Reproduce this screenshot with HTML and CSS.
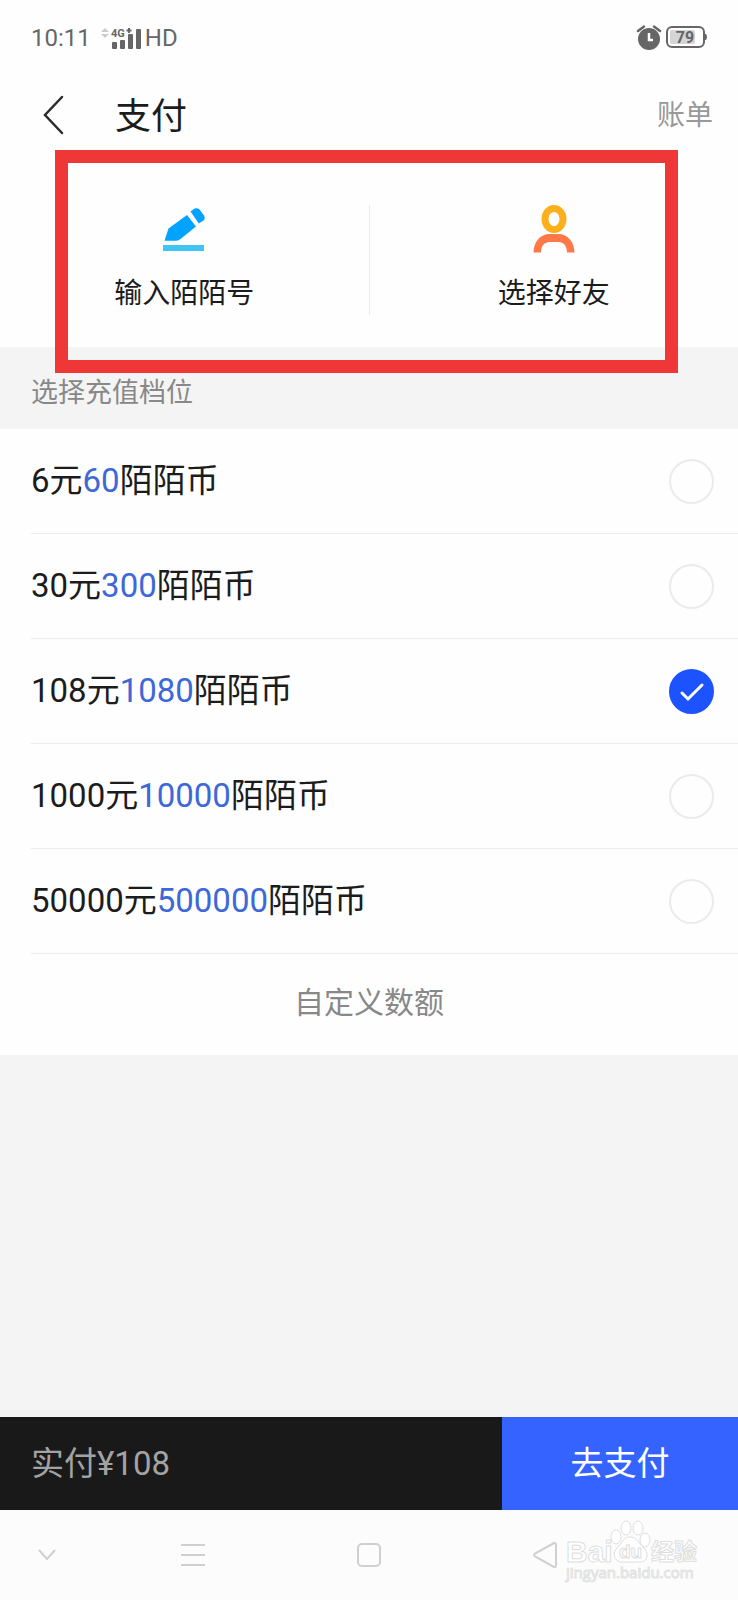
FILE: index.html
```html
<!DOCTYPE html>
<html lang="zh-CN">
<head>
  <meta charset="UTF-8">
  <meta name="viewport" content="width=device-width, initial-scale=1">
  <title>支付</title>
  <link rel="stylesheet" href="styles.css">
</head>
<body>
  <div class="status-bar">
    <span class="time">10:11</span>
    <svg class="signal" width="42" height="24" viewBox="0 0 42 24" aria-hidden="true">
      <path d="M0 6l4-4 4 4zM0 8l4 4 4-4z" fill="#ccc"/>
      <text x="10" y="11" font-size="11">4G</text>
      <path d="M28 2v5M25.500 4.500h5" stroke="#666" stroke-width="2"/>
      <g fill="#666">
        <rect x="11" y="16" width="5" height="7" rx="1"/>
        <rect x="19" y="14" width="5" height="9" rx="1"/>
        <rect x="27" y="8" width="5" height="15" rx="1"/>
        <rect x="35" y="3" width="5" height="20" rx="1"/>
      </g>
    </svg>
    <span class="hd">HD</span>
    <svg class="alarm" width="26" height="26" viewBox="0 0 26 26" aria-hidden="true">
      <circle cx="13" cy="14" r="11" fill="#666"/>
      <path d="M2 6l6-4.500M24 6l-6-4.500" stroke="#666" stroke-width="2.500" stroke-linecap="round"/>
      <path d="M13 8v7h4" fill="none" stroke="#fff" stroke-width="2.500"/>
    </svg>
    <svg class="battery" width="42" height="24" viewBox="0 0 42 24" aria-hidden="true">
      <rect x="1" y="1" width="37" height="20" rx="5" fill="#fff" stroke="#666" stroke-width="2"/>
      <rect x="4" y="4" width="25" height="14" rx="2" fill="#d5d5d5"/>
      <path d="M38 8h2q2 3 0 6h-2z" fill="#666"/>
      <text x="19" y="17" font-size="16" text-anchor="middle">79</text>
    </svg>
  </div>

  <header class="header">
    <button class="back" aria-label="返回">
      <svg width="24" height="40" viewBox="0 0 24 40" aria-hidden="true">
        <path d="M21 2L4 20l17 18" fill="none" stroke="#2b2b2b" stroke-width="2.500" stroke-linecap="round"/>
      </svg>
    </button>
    <h1>支付</h1>
    <a class="bill" href="#">账单</a>
  </header>

  <section class="actions">
    <button class="action">
      <svg width="48" height="48" viewBox="0 0 48 48" aria-hidden="true">
        <path d="M27 10l9 11.500-15.500 12.500q-2 1.700-4 1.700H4.500L8.500 23.500z" fill="#00a3ff"/>
        <path d="M30.500 6.500l4-3q3-1 5 1l4.500 6q1.500 3-.5 5L38.800 18.500z" fill="#00a3ff"/>
        <rect x="3" y="40" width="41" height="6" fill="#40c4f4"/>
      </svg>
      <span>输入陌陌号</span>
    </button>
    <button class="action">
      <svg width="48" height="48" viewBox="0 0 48 48" aria-hidden="true">
        <ellipse cx="24" cy="14" rx="9" ry="10.500" fill="none" stroke="#fdb01e" stroke-width="7"/>
        <path d="M3.500 47.500C3.500 37 10.500 29 19.500 29h9c9 0 16 8 16 18.500h-7.500C37 41 33.500 37 28.500 37h-9c-5 0-8.500 4-8.500 10.500z" fill="#ff7847"/>
      </svg>
      <span>选择好友</span>
    </button>
    <div class="highlight"></div>
  </section>

  <main class="content">
    <h2 class="section-title" id="tiers">选择充值档位</h2>
    <div class="options" role="radiogroup" aria-labelledby="tiers">
      <label class="option">
        <span>6元<b>60</b>陌陌币</span>
        <input type="radio" name="tier" value="6">
      </label>
      <label class="option">
        <span>30元<b>300</b>陌陌币</span>
        <input type="radio" name="tier" value="30">
      </label>
      <label class="option">
        <span>108元<b>1080</b>陌陌币</span>
        <input type="radio" name="tier" value="108" checked>
      </label>
      <label class="option">
        <span>1000元<b>10000</b>陌陌币</span>
        <input type="radio" name="tier" value="1000">
      </label>
      <label class="option">
        <span>50000元<b>500000</b>陌陌币</span>
        <input type="radio" name="tier" value="50000">
      </label>
    </div>
    <button class="custom">自定义数额</button>
  </main>

  <footer class="pay-bar">
    <div class="total">实付¥108</div>
    <button class="pay">去支付</button>
  </footer>

  <nav class="nav-bar">
    <button aria-label="收起">
      <svg width="26" height="26" viewBox="0 0 26 26"><path d="M5 8l8 9 8-9"/></svg>
    </button>
    <button aria-label="菜单">
      <svg width="26" height="26" viewBox="0 0 26 26"><path d="M1 3h24M1 13h24M1 23h24"/></svg>
    </button>
    <button aria-label="主页">
      <svg width="26" height="26" viewBox="0 0 26 26"><rect x="2" y="2" width="22" height="22" rx="4"/></svg>
    </button>
    <button aria-label="后退">
      <svg width="26" height="28" viewBox="0 0 26 28"><path d="M21 2L2 12.500q-2 1.500 0 3L21 26q2 .5 2-2V4q0-2.500-2-2z"/></svg>
    </button>
    <svg class="watermark" width="140" height="68" viewBox="0 0 140 68">
      <g class="outline">
        <text x="2" y="46" font-size="30">Bai</text>
        <ellipse cx="52" cy="21" rx="5" ry="7"/>
        <ellipse cx="62" cy="12" rx="5" ry="7"/>
        <ellipse cx="74" cy="12" rx="5" ry="7"/>
        <ellipse cx="81" cy="24" rx="5" ry="7"/>
        <path d="M66 21c-7 0-8 7-13 11-5 5-3 13 4 14h19c8 0 9-9 4-14-5-4-7-11-14-11z"/>
        <text x="55" y="42" font-size="19">du</text>
        <text class="cn" x="87" y="44" font-size="23">经验</text>
      </g>
      <text class="url" x="2" y="62" font-size="15">jingyan.baidu.com</text>
    </svg>
  </nav>
</body>
</html>
```

FILE: styles.css
```css
* {
  box-sizing: border-box;
}

body {
  display: flex;
  flex-direction: column;
  min-height: 100vh;
  margin: 0;
  background-color: #fefefe;
  color: #1c1c1c;
  font-family: Roboto, "Noto Sans CJK SC", sans-serif;
}

button {
  padding: 0;
  border: none;
  background: none;
  color: inherit;
  font-family: inherit;
  cursor: pointer;
}

svg {
  display: block;
}

/* Status bar */
.status-bar {
  display: flex;
  align-items: center;
  height: 76px;
  padding: 0 30px 0 31px;
  color: #666;
  font-size: 24px;
}

.signal {
  margin: 0 2px 0 10px;
}

.signal text,
.battery text {
  fill: #666;
  font-weight: bold;
}

.alarm {
  margin-left: auto;
  margin-right: 4px;
}

/* Header */
.header {
  display: flex;
  align-items: center;
  height: 78px;
  padding: 0 25px 0 41px;
}

.header h1 {
  flex: 1;
  margin: 0 0 0 50px;
  padding-bottom: 4px;
  font-size: 36px;
  font-weight: 400;
}

.bill {
  padding-bottom: 4px;
  color: #999;
  font-size: 28px;
  text-decoration: none;
}

/* Actions */
.actions {
  position: relative;
  display: flex;
  padding: 51px 0 32px;
}

.action {
  display: flex;
  flex: 1;
  flex-direction: column;
  align-items: center;
  gap: 20px;
  font-size: 28px;
  line-height: 42px;
}

.action:first-child {
  border-right: 1px solid #ebebeb;
}

.highlight {
  position: absolute;
  top: -4px;
  right: 60px;
  bottom: -26px;
  left: 55px;
  border: 13px solid #ef3737;
  pointer-events: none;
}

/* Options */
.content {
  flex: 1;
  background-color: #f4f4f4;
}

.section-title {
  margin: 0;
  padding: 26px 31px 16px;
  color: #888;
  font-size: 27px;
  font-weight: 400;
  line-height: 40px;
}

.options {
  padding-left: 31px;
  background-color: #fefefe;
}

.option {
  display: flex;
  align-items: center;
  justify-content: space-between;
  height: 105px;
  padding-right: 24px;
  border-bottom: 1px solid #ebebeb;
  font-size: 33px;
  cursor: pointer;
}

.option span {
  padding-bottom: 6px;
}

.option b {
  color: #3d68d8;
  font-weight: 400;
}

.option input {
  width: 45px;
  height: 45px;
  margin: 0;
  border: 2px solid #ebebeb;
  border-radius: 50%;
  appearance: none;
}

.option input:checked {
  border-color: #1d53ff;
  background: #1d53ff url("data:image/svg+xml,%3Csvg xmlns='http://www.w3.org/2000/svg' viewBox='0 0 41 41'%3E%3Cpath d='M11 22l6 6 14-14' fill='none' stroke='white' stroke-width='3' stroke-linecap='round'/%3E%3C/svg%3E") center / 41px no-repeat;
}

.custom {
  display: block;
  width: 100%;
  height: 101px;
  padding-bottom: 10px;
  background-color: #fefefe;
  color: #888;
  font-size: 30px;
}

/* Pay bar */
.pay-bar {
  display: flex;
  height: 93px;
  background-color: #191919;
  font-size: 33px;
}

.total {
  flex: 1;
  padding-left: 31px;
  color: #a3a3a3;
  line-height: 93px;
}

.pay {
  width: 32%;
  padding-bottom: 5px;
  background-color: #3463ff;
  color: #fff;
  font-size: 33px;
}

/* System navigation */
.nav-bar {
  position: relative;
  display: grid;
  grid-template-columns: 94fr 197fr 156fr 197fr 94fr;
  height: 90px;
  background-color: #fcfcfc;
}

.nav-bar button {
  display: flex;
  align-items: center;
  justify-content: center;
}

.nav-bar button svg {
  fill: none;
  stroke: #d0d0d0;
  stroke-width: 2;
}

.watermark {
  position: absolute;
  right: 34px;
  top: 6px;
}

.outline {
  fill: #fff;
  stroke: #dedede;
  stroke-width: 1;
  font-family: "Liberation Sans", sans-serif;
  font-weight: bold;
}

.outline .cn {
  font-family: "Noto Sans CJK SC", sans-serif;
}

.url {
  fill: #fff;
  stroke: #e2e2e2;
  stroke-width: 1;
  font-family: "Open Sans", sans-serif;
}
```
